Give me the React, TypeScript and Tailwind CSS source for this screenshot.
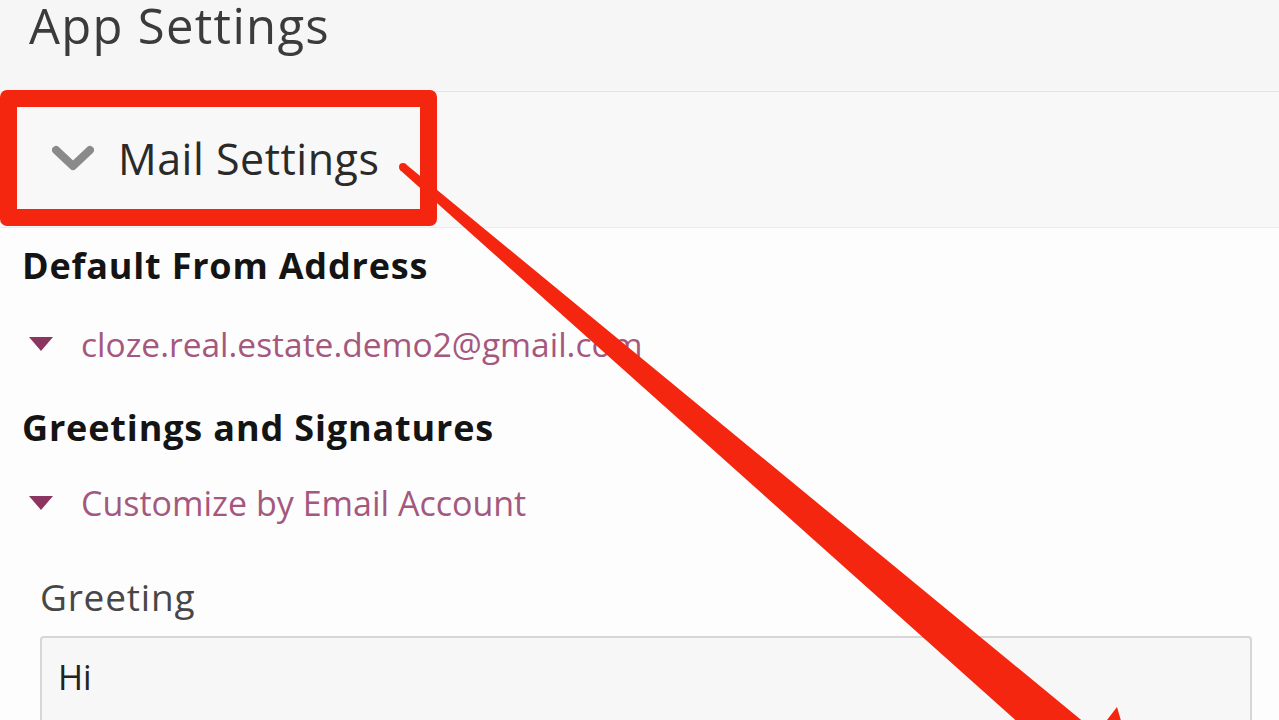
import React from 'react'

const font = { fontFamily: '"Open Sans", "Liberation Sans", sans-serif' }

function Chevron() {
    return (
        <svg width="42" height="28" viewBox="0 0 42 28" className="shrink-0">
            <path d="M4 5 L21 21 L38 5" fill="none" stroke="#8a8a8a" strokeWidth="8" strokeLinecap="round" strokeLinejoin="round" />
        </svg>
    )
}

function Caret() {
    return (
        <svg width="26" height="16" viewBox="0 0 26 16" className="shrink-0">
            <path d="M1 1 L25 1 L13 15 Z" fill="#8c3560" />
        </svg>
    )
}

// red annotation drawn over the screenshot
function Annotation() {
    return (
        <>
            <div className="absolute left-0 top-[90px] w-[437px] h-[136px] border-[17px] border-[#f4260f] rounded-[7px] pointer-events-none" />
            <svg className="absolute inset-0 pointer-events-none" width="1279" height="720" viewBox="0 0 1279 720">
                <polygon
                    points="400,170 405.6,164 1097,733 1117,707 1150,820 1042,797 1068,767"
                    fill="#f4260f"
                />
                <circle cx="403" cy="167" r="4" fill="#f4260f" />
            </svg>
        </>
    )
}

export default function App() {
    return (
        <div className="relative w-[1279px] h-[720px] overflow-hidden bg-[#fdfdfd]" style={font}>

            {/* Page title */}
            <div className="h-[92px] bg-[#f6f6f6] border-b border-[#e4e4e4] pl-[29px]">
                <h1 className="text-[49px] leading-[50px] tracking-[1.3px] text-[#3b3b3b]">App Settings</h1>
            </div>

            {/* Section header */}
            <div className="h-[136px] bg-[#f8f8f8] border-b border-[#ebebeb] flex items-center pl-[52px] pb-[2px] gap-[24px]">
                <Chevron />
                <span className="text-[43px] leading-[50px] tracking-[0.5px] text-[#2a2a2a]">Mail Settings</span>
            </div>

            {/* Content */}
            <div className="pl-[22px] pr-[27px]">
                <h2 className="mt-[16px] text-[36px] leading-[44px] font-bold tracking-[0.8px] text-[#141414]">Default From Address</h2>
                <div className="mt-[36px] flex items-center gap-[27px] pl-[6px]">
                    <Caret />
                    <span className="text-[33.5px] leading-[40px] text-[#a5587e]">cloze.real.estate.demo2@gmail.com</span>
                </div>

                <h2 className="mt-[42px] text-[36px] leading-[44px] font-bold tracking-[0.85px] text-[#141414]">Greetings and Signatures</h2>
                <div className="mt-[33px] flex items-center gap-[27px] pl-[6px]">
                    <Caret />
                    <span className="text-[34px] leading-[40px] text-[#a5587e]">Customize by Email Account</span>
                </div>

                <div className="mt-[54px] pl-[18px]">
                    <label className="block text-[37px] leading-[40px] tracking-[0.8px] text-[#474747]">Greeting</label>
                    <div className="mt-[19px] h-[100px] bg-[#f7f7f7] border-2 border-[#d6d6d6] rounded-[4px] pl-[16px] pt-[19px]">
                        <span className="text-[34px] leading-[40px] text-[#222]">Hi</span>
                    </div>
                </div>
            </div>

            <Annotation />
        </div>
    )
}
